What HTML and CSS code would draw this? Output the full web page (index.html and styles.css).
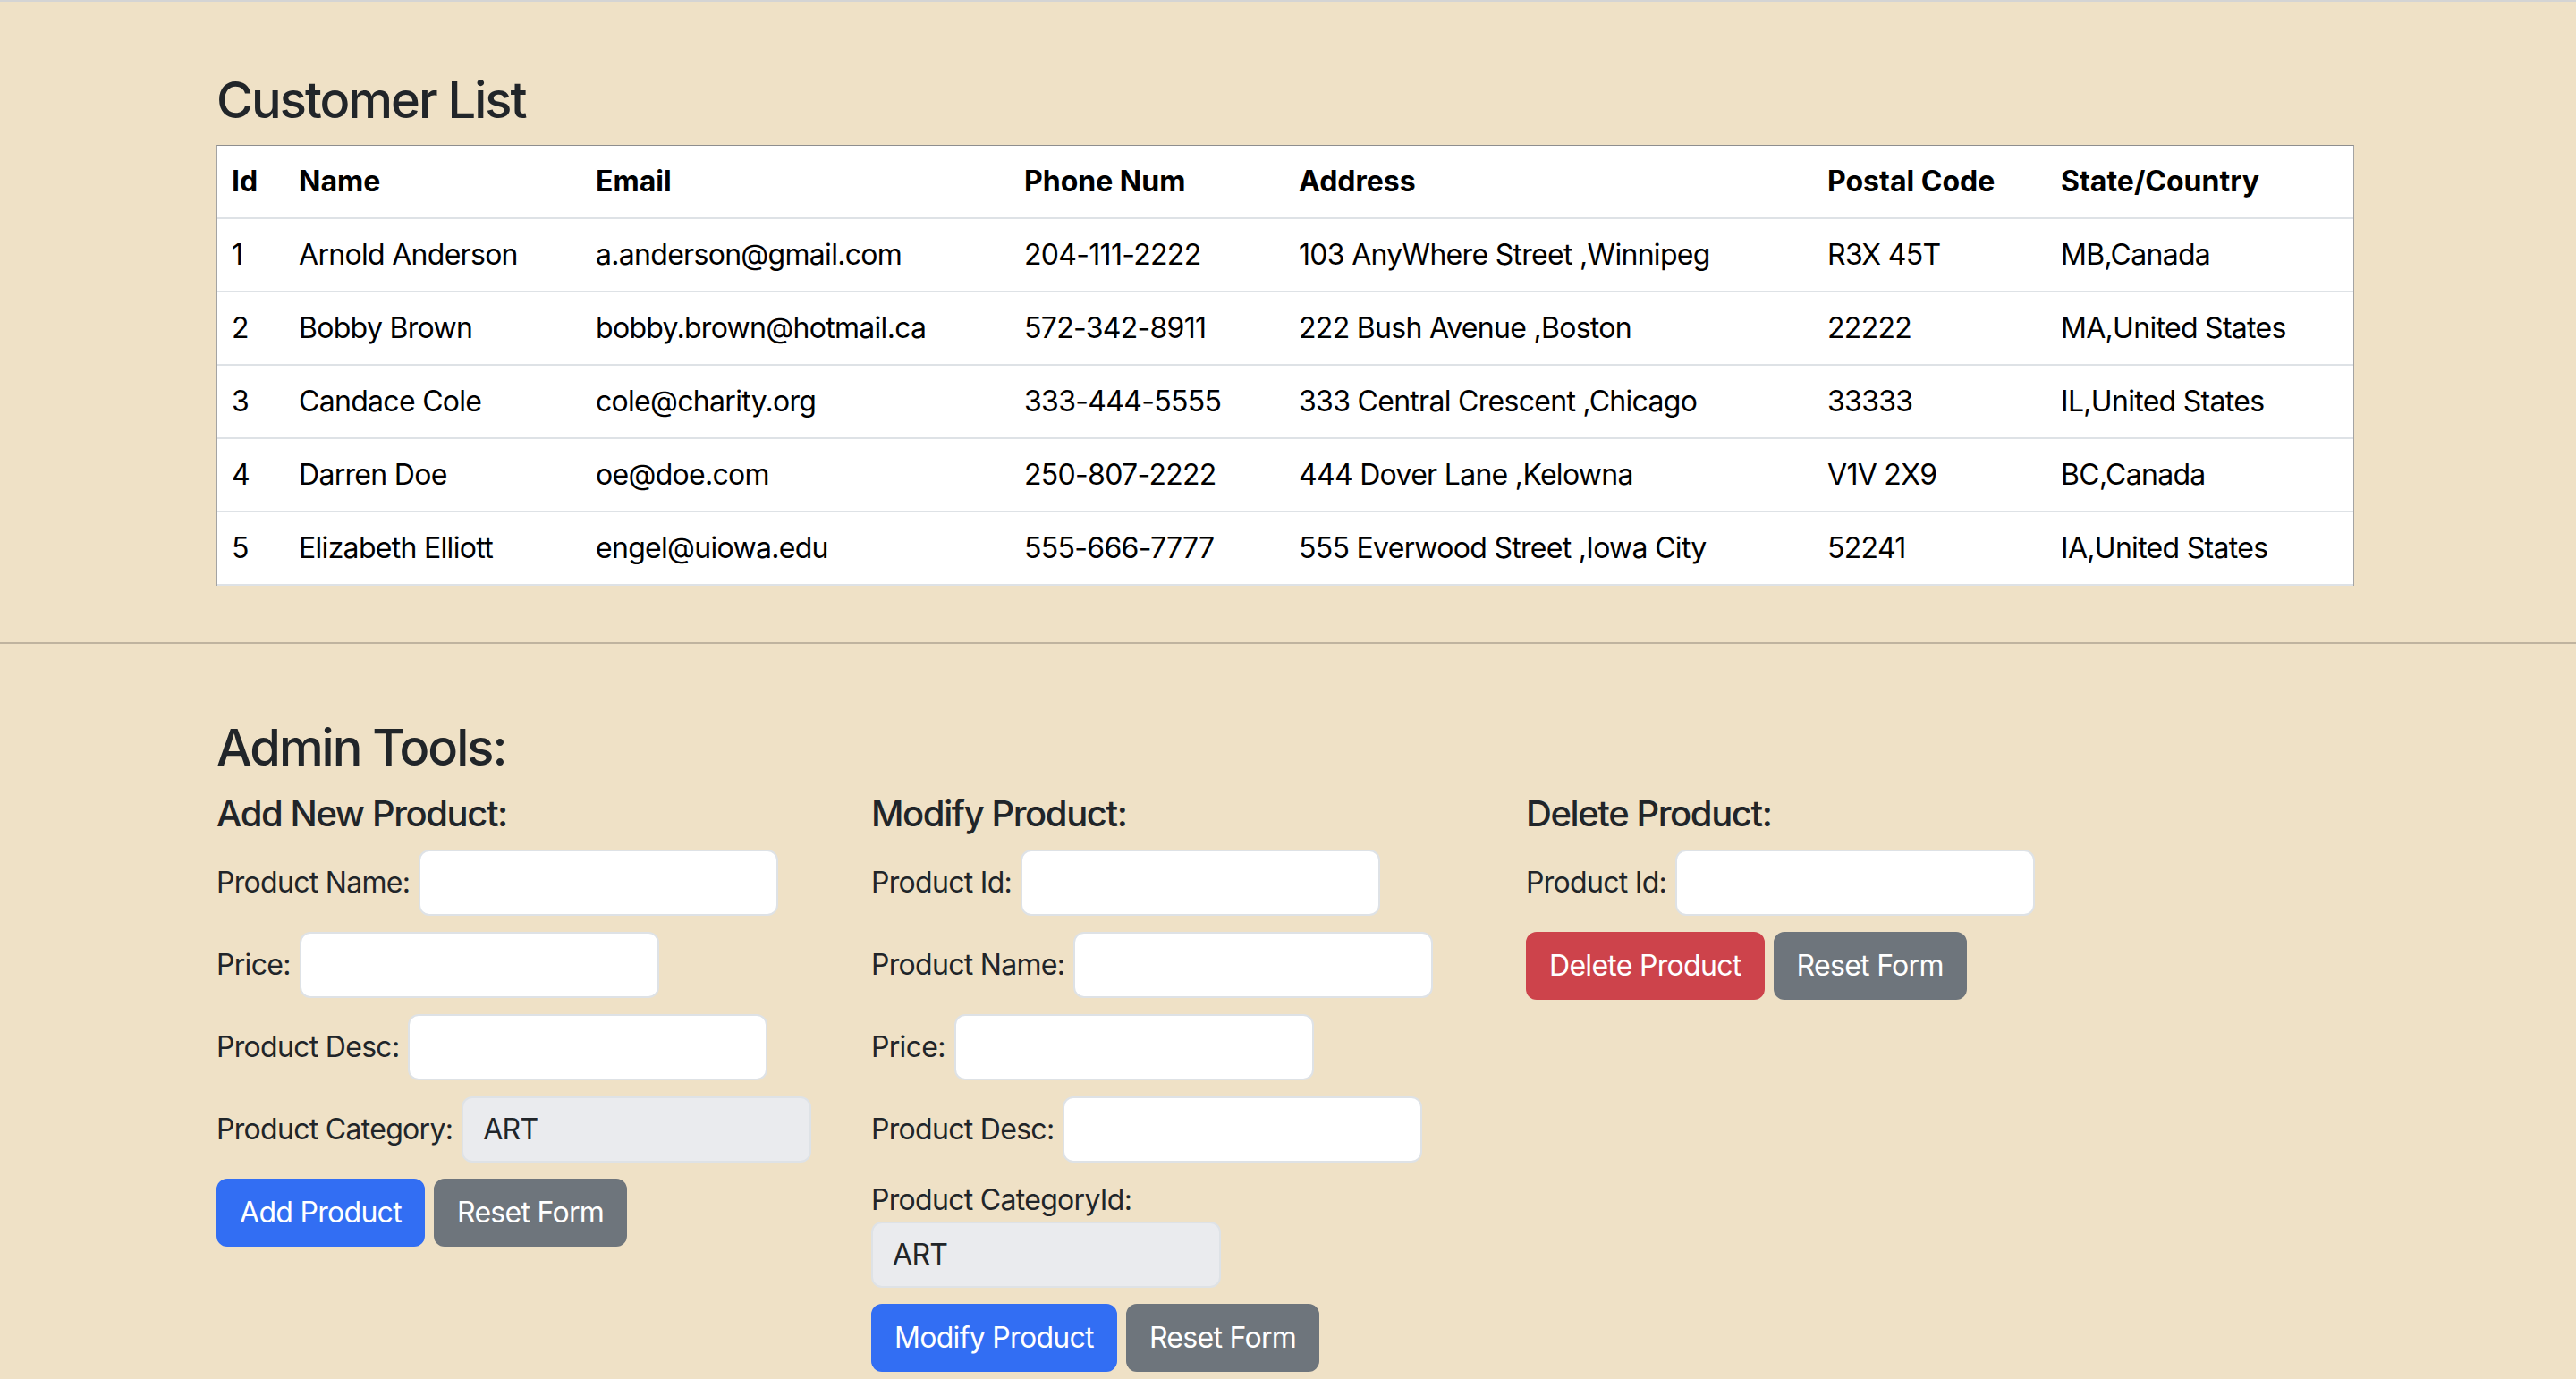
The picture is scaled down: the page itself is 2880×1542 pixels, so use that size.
FILE: index.html
```html
<!DOCTYPE html>
<html lang="en">
<head>
<meta charset="utf-8">
<title>Customer List</title>
<link rel="stylesheet" href="styles.css">
</head>
<body>
<div class="topline"></div>
<main class="page">
  <section class="container customers">
    <h3 class="title">Customer List</h3>
    <table class="ctable">
      <colgroup>
        <col class="c-id"><col class="c-name"><col class="c-email"><col class="c-phone"><col class="c-addr"><col class="c-postal"><col class="c-state">
      </colgroup>
      <thead>
        <tr><th>Id</th><th>Name</th><th>Email</th><th>Phone Num</th><th>Address</th><th>Postal Code</th><th>State/Country</th></tr>
      </thead>
      <tbody>
        <tr><td>1</td><td>Arnold Anderson</td><td>a.anderson@gmail.com</td><td>204-111-2222</td><td>103 AnyWhere Street ,Winnipeg</td><td>R3X 45T</td><td>MB,Canada</td></tr>
        <tr><td>2</td><td>Bobby Brown</td><td>bobby.brown@hotmail.ca</td><td>572-342-8911</td><td>222 Bush Avenue ,Boston</td><td>22222</td><td>MA,United States</td></tr>
        <tr><td>3</td><td>Candace Cole</td><td>cole@charity.org</td><td>333-444-5555</td><td>333 Central Crescent ,Chicago</td><td>33333</td><td>IL,United States</td></tr>
        <tr><td>4</td><td>Darren Doe</td><td>oe@doe.com</td><td>250-807-2222</td><td>444 Dover Lane ,Kelowna</td><td>V1V 2X9</td><td>BC,Canada</td></tr>
        <tr><td>5</td><td>Elizabeth Elliott</td><td>engel@uiowa.edu</td><td>555-666-7777</td><td>555 Everwood Street ,Iowa City</td><td>52241</td><td>IA,United States</td></tr>
      </tbody>
    </table>
  </section>

  <hr class="divider">

  <section class="container admin">
    <h3 class="title">Admin Tools:</h3>
    <div class="tools">
      <form class="tool">
        <h5 class="subtitle">Add New Product:</h5>
        <div class="field"><label class="lbl">Product Name:</label><input class="inp" type="text"></div>
        <div class="field"><label class="lbl">Price:</label><input class="inp" type="text"></div>
        <div class="field"><label class="lbl">Product Desc:</label><input class="inp" type="text"></div>
        <div class="field"><label class="lbl">Product Category:</label><div class="sel">ART</div></div>
        <div class="actions"><button type="button" class="btn btn-primary">Add Product</button><button type="button" class="btn btn-secondary">Reset Form</button></div>
      </form>

      <form class="tool">
        <h5 class="subtitle">Modify Product:</h5>
        <div class="field"><label class="lbl">Product Id:</label><input class="inp" type="text"></div>
        <div class="field"><label class="lbl">Product Name:</label><input class="inp" type="text"></div>
        <div class="field"><label class="lbl">Price:</label><input class="inp" type="text"></div>
        <div class="field"><label class="lbl">Product Desc:</label><input class="inp" type="text"></div>
        <div class="field-stack"><label class="lbl">Product CategoryId:</label><div class="sel">ART</div></div>
        <div class="actions"><button type="button" class="btn btn-primary">Modify Product</button><button type="button" class="btn btn-secondary">Reset Form</button></div>
      </form>

      <form class="tool">
        <h5 class="subtitle">Delete Product:</h5>
        <div class="field"><label class="lbl">Product Id:</label><input class="inp" type="text"></div>
        <div class="actions"><button type="button" class="btn btn-danger">Delete Product</button><button type="button" class="btn btn-secondary">Reset Form</button></div>
      </form>
    </div>
  </section>
</main>
</body>
</html>
```

FILE: styles.css
```css
* { box-sizing: border-box; }

html, body {
  margin: 0;
  padding: 0;
  background: #efe1c6;
}

body {
  font-family: Inter, "Noto Sans", sans-serif;
  font-size: 32px;
  line-height: 48px;
  letter-spacing: -0.7px;
  color: #212529;
  min-height: 1542px;
}

.topline {
  height: 2px;
  background: #d4d4d4;
}

.page {
  padding-top: 77px;
}

.container {
  width: 2390px;
  margin-left: 242px;
}

.title {
  margin: 0 0 16px 0;
  font-size: 56px;
  line-height: 67px;
  font-weight: 500;
  letter-spacing: -2px;
  color: #212529;
}

/* table */
.ctable {
  width: 2390px;
  table-layout: fixed;
  border-collapse: separate;
  border-spacing: 0;
  background: #fff;
  border-top: 1px solid #8e8e8e;
  border-left: 1px solid #a3a3a3;
  border-right: 1px solid #a3a3a3;
  color: #000;
}

.c-id { width: 75px; }
.c-name { width: 332px; }
.c-email { width: 479px; }
.c-phone { width: 307px; }
.c-addr { width: 591px; }
.c-postal { width: 261px; }
.c-state { width: 343px; }

.ctable th,
.ctable td {
  text-align: left;
  padding: 16px 16px;
  line-height: 48px;
  border-bottom: 2px solid #dee2e6;
  white-space: nowrap;
  vertical-align: middle;
}

.ctable th { font-weight: 700; letter-spacing: 0; }
.ctable td { font-weight: 400; }

.divider {
  margin: 63px 0 0 0;
  border: 0;
  height: 2px;
  background: #bfb39f;
}

.admin {
  padding-top: 83px;
}

.tools {
  display: grid;
  grid-template-columns: repeat(3, 683px);
  column-gap: 49px;
  align-items: start;
}

.subtitle {
  margin: 0 0 16px 0;
  font-size: 40px;
  line-height: 48px;
  font-weight: 500;
  letter-spacing: -1.4px;
  color: #212529;
}

.field {
  display: flex;
  align-items: center;
  gap: 10px;
  height: 74px;
  margin-bottom: 18px;
}

.field-stack {
  display: flex;
  flex-direction: column;
  align-items: flex-start;
  margin-bottom: 18px;
}

.lbl {
  white-space: nowrap;
  color: #212529;
}

.inp {
  width: 402px;
  height: 74px;
  border: 2px solid #dee2e6;
  border-radius: 12px;
  background: #fff;
  font: inherit;
  padding: 0 22px;
  outline: none;
}

.sel {
  width: 391px;
  height: 74px;
  border: 2px solid #dee2e6;
  border-radius: 12px;
  background: #eaebee;
  padding: 0 22px;
  display: flex;
  align-items: center;
  color: #212529;
}

.actions {
  display: flex;
  gap: 10px;
}

.btn {
  font: inherit;
  font-size: 32px;
  line-height: 48px;
  letter-spacing: -0.7px;
  color: #fff;
  border: 2px solid transparent;
  border-radius: 12px;
  padding: 12px 24px;
  height: 76px;
  cursor: pointer;
}

.btn-primary { background: #326ef3; border-color: #326ef3; }
.btn-secondary { background: #6e757c; border-color: #6e757c; }
.btn-danger { background: #cd434b; border-color: #cd434b; }
```
